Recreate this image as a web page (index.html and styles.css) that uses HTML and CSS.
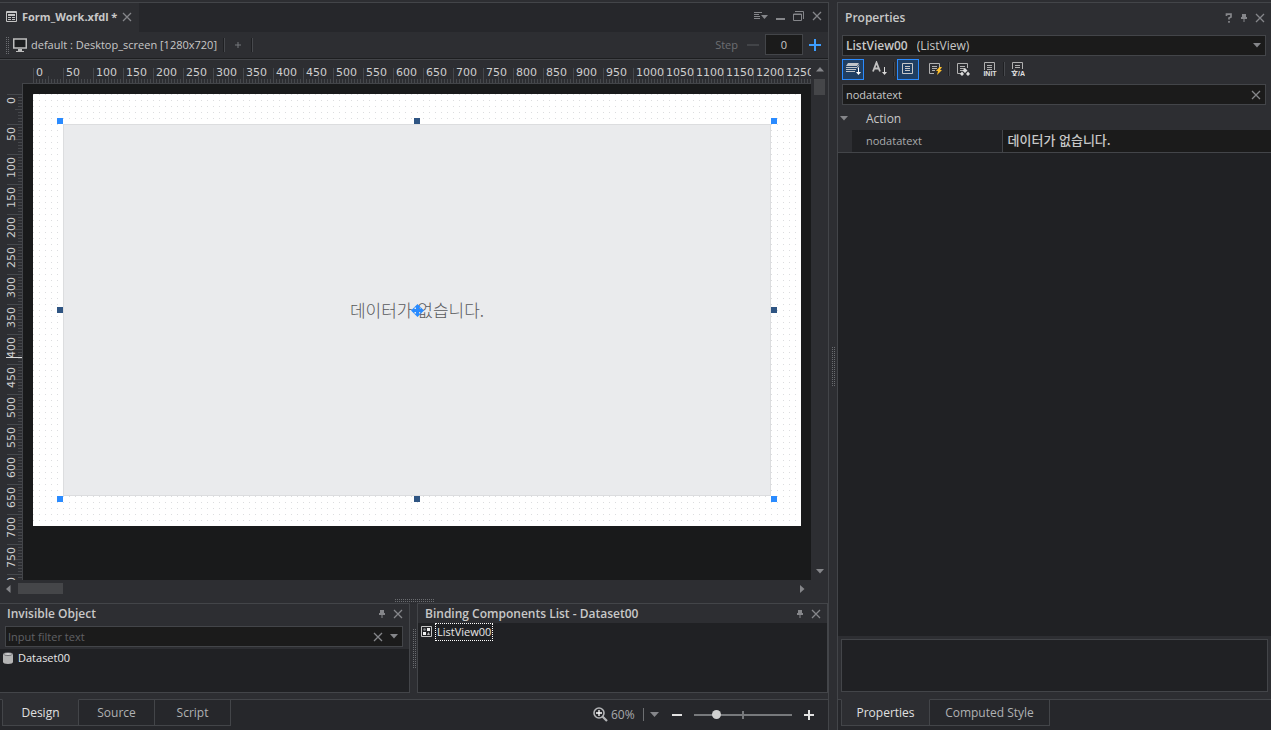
FILE: index.html
```html
<!DOCTYPE html>
<html lang="ko">
<head>
<meta charset="utf-8">
<title>Form_Work.xfdl</title>
<meta name="viewport" content="width=device-width, initial-scale=1">
<link rel="stylesheet" href="styles.css">
</head>
<body>
<svg class="defs" aria-hidden="true">
  <symbol id="close" viewBox="0 0 10 10"><path d="M1 1l8 8M9 1l-8 8" fill="none" stroke="currentColor" stroke-width="1.3"/></symbol>
  <symbol id="pin" viewBox="0 0 8 10"><path d="M2 1h4v3h1v2H1V4h1zM3.500 6h1v3h-1z" fill="currentColor"/></symbol>
  <symbol id="down" viewBox="0 0 8 5"><path d="M0 0h8L4 4.500z" fill="currentColor"/></symbol>
  <symbol id="page" viewBox="0 0 14 14"><path d="M11.500 6V1.500h-10v10H6M4 4.500h5M4 6.500h5M4 8.500h3" fill="none" stroke="currentColor"/></symbol>
</svg>
<div class="app">
  <main class="editor">
    <header class="doc-bar">
      <div class="doc-tab">
        <svg width="11" height="11" viewBox="0 0 11 11"><path d="M.5.5h10v10H.5zM0 1.500h11" fill="none" stroke="#c4c4c4"/><path d="M2 3h7v2H2zM2 6h3v1H2zM6 6h3v1H6zM2 8h3v1H2zM6 8h3v1H6z" fill="#c4c4c4"/></svg>
        <strong>Form_Work.xfdl *</strong>
        <button class="icon" aria-label="Close document"><svg width="10" height="10"><use href="#close"/></svg></button>
      </div>
      <div class="window-tools">
        <button class="icon" aria-label="Window list"><svg width="14" height="8" viewBox="0 0 14 8"><path d="M0 .5h8M0 2.500h5M0 4.500h6M0 6.500h6" stroke="currentColor"/><path d="M7 3h7l-3.500 4z" fill="currentColor"/></svg></button>
        <button class="icon" aria-label="Minimize"><svg width="9" height="10" viewBox="0 0 9 10"><path d="M0 8h9" stroke="currentColor" stroke-width="2"/></svg></button>
        <button class="icon" aria-label="Restore"><svg width="11" height="10" viewBox="0 0 11 10"><path d="M2 .5h8.500V8M.5 3h8v6.500h-8zM.5 3.500h8" fill="none" stroke="currentColor"/></svg></button>
        <button class="icon" aria-label="Close"><svg width="10" height="10"><use href="#close"/></svg></button>
      </div>
    </header>

    <div class="layout-bar">
      <span class="grip tall"></span>
      <button class="layout-button">
        <svg width="14" height="14" viewBox="0 0 14 14"><path d="M.75 1h12.500v9H.75z" fill="#1d1e20" stroke="#bdbdbd" stroke-width="1.500"/><path d="M5 11h4v2h2v1H3v-1h2z" fill="#bdbdbd"/></svg>
        default : Desktop_screen [1280x720]
      </button>
      <span class="divider"></span>
      <button class="add" aria-label="Add layout"><svg width="6" height="6" viewBox="0 0 6 6"><path d="M3 0v6M0 3h6" stroke="currentColor"/></svg></button>
      <span class="divider"></span>
      <div class="stepper">
        <label for="step">Step</label>
        <button class="icon minus" aria-label="Decrease step"><svg width="12" height="12" viewBox="0 0 12 12"><path d="M0 6h12" stroke="currentColor" stroke-width="1.500"/></svg></button>
        <input id="step" type="text" inputmode="numeric" value="0">
        <button class="icon plus" aria-label="Increase step"><svg width="12" height="12" viewBox="0 0 12 12"><path d="M6 0v12M0 6h12" stroke="currentColor" stroke-width="2"/></svg></button>
      </div>
    </div>

    <section class="workspace">
      <div class="ruler-x"><div class="ticks-x">
        <span>0</span><span>50</span><span>100</span><span>150</span><span>200</span><span>250</span><span>300</span><span>350</span><span>400</span><span>450</span><span>500</span><span>550</span><span>600</span><span>650</span><span>700</span><span>750</span><span>800</span><span>850</span><span>900</span><span>950</span><span>1000</span><span>1050</span><span>1100</span><span>1150</span><span>1200</span><span>1250</span>
      </div></div>
      <div class="ruler-y"><div class="ticks-y">
        <span>0</span><span>50</span><span>100</span><span>150</span><span>200</span><span>250</span><span>300</span><span>350</span><span>400</span><span>450</span><span>500</span><span>550</span><span>600</span><span>650</span><span>700</span><span>750</span><span>800</span>
        <i class="cursor-mark"></i>
      </div></div>
      <div class="stage">
        <div class="form">
          <div class="listview">
            <span class="empty-text">데이터가 없습니다.</span>
            <svg class="move" width="13" height="13" viewBox="0 0 13 13"><path d="M6.500 0L10 3.500H8V5h1.500V3L13 6.500 9.500 10V8H8v1.500h2L6.500 13 3 9.500h2V8H3.500v2L0 6.500 3.500 3v2H5V3.500H3z" fill="#2a8bff"/></svg>
            <i class="handle n w corner"></i><i class="handle n cx"></i><i class="handle n e corner"></i>
            <i class="handle cy w"></i><i class="handle cy e"></i>
            <i class="handle s w corner"></i><i class="handle s cx"></i><i class="handle s e corner"></i>
          </div>
        </div>
      </div>
      <div class="scroll-y">
        <svg width="8" height="5" viewBox="0 0 8 5"><path d="M0 4.500h8L4 0z" fill="currentColor"/></svg>
        <span class="thumb"></span>
        <svg class="last" width="8" height="5"><use href="#down"/></svg>
      </div>
      <div class="scroll-x">
        <svg width="5" height="8" viewBox="0 0 5 8"><path d="M4.500 0v8L0 4z" fill="currentColor"/></svg>
        <span class="thumb"></span>
        <svg class="last" width="5" height="8" viewBox="0 0 5 8"><path d="M0 0v8l4.500-4z" fill="currentColor"/></svg>
      </div>
    </section>

    <section class="dock">
      <span class="grip wide"></span>
      <div class="dock-panels">
        <section class="panel objects">
          <header class="panel-head">
            <h2>Invisible Object</h2>
            <button class="icon" aria-label="Pin"><svg width="8" height="10"><use href="#pin"/></svg></button>
            <button class="icon" aria-label="Close"><svg width="10" height="10"><use href="#close"/></svg></button>
          </header>
          <div class="field filter">
            <input type="text" aria-label="Filter objects" placeholder="Input filter text">
            <button class="icon" aria-label="Clear filter"><svg width="10" height="10"><use href="#close"/></svg></button>
            <button class="icon" aria-label="Filter history"><svg width="8" height="5"><use href="#down"/></svg></button>
          </div>
          <ul class="list">
            <li><svg width="10" height="12" viewBox="0 0 10 12"><path d="M0 2v8c0 1.200 2 2 5 2s5-.8 5-2V2z" fill="#b4b4b4"/><ellipse cx="5" cy="2" rx="4.500" ry="1.500" fill="#d0d0d0" stroke="#55565a" stroke-width=".8"/></svg><span>Dataset00</span></li>
          </ul>
        </section>
        <div class="gutter"><span class="grip side"></span></div>
        <section class="panel binding">
          <header class="panel-head">
            <h2>Binding Components List - Dataset00</h2>
            <button class="icon" aria-label="Pin"><svg width="8" height="10"><use href="#pin"/></svg></button>
            <button class="icon" aria-label="Close"><svg width="10" height="10"><use href="#close"/></svg></button>
          </header>
          <ul class="list">
            <li><svg width="11" height="11" viewBox="0 0 11 11"><path d="M.5.5h10v10H.5z" fill="none" stroke="#c4c4c4"/><path d="M6 2h3v3H6zM2 6h3v3H2z" fill="#f2f2f2"/><circle cx="3.500" cy="3.500" r="1.300" fill="#85878a"/><path d="M6 9l1.500-3L9 9z" fill="#b8b8b8"/></svg><span class="focused">ListView00</span></li>
          </ul>
        </section>
      </div>
    </section>

    <footer class="status">
      <nav class="tabs design-tabs">
        <button class="active">Design</button><button>Source</button><button>Script</button>
      </nav>
      <div class="zoom">
        <svg width="15" height="15" viewBox="0 0 15 15"><circle cx="6" cy="6" r="5" fill="none" stroke="#b4b5b7" stroke-width="1.600"/><path d="M9.500 9.500l4.500 4.500" stroke="#b4b5b7" stroke-width="2.200"/><path d="M6 3v6M3 6h6" stroke="#fff" stroke-width="1.300"/></svg>
        <div class="select-box">
          <select aria-label="Zoom"><option>60%</option></select>
          <svg width="9" height="5" viewBox="0 0 9 5"><path d="M0 0h9L4.500 5z" fill="currentColor"/></svg>
        </div>
        <button class="icon bright" aria-label="Zoom out"><svg width="10" height="10" viewBox="0 0 10 10"><path d="M0 5h10" stroke="currentColor" stroke-width="2"/></svg></button>
        <input class="slider" type="range" min="0" max="100" value="20" aria-label="Zoom level">
        <button class="icon bright" aria-label="Zoom in"><svg width="10" height="10" viewBox="0 0 10 10"><path d="M5 0v10M0 5h10" stroke="currentColor" stroke-width="2"/></svg></button>
      </div>
    </footer>
  </main>

  <div class="splitter"><span class="grip side"></span></div>

  <aside class="properties">
    <header class="panel-head props-head">
      <h2>Properties</h2>
      <button class="icon" aria-label="Help"><svg width="8" height="10" viewBox="0 0 8 10"><path d="M1.500 3V1.200h4.500V4L4 5v1.500M4 8v1.700" fill="none" stroke="currentColor" stroke-width="1.700"/></svg></button>
      <button class="icon" aria-label="Pin"><svg width="8" height="10"><use href="#pin"/></svg></button>
      <button class="icon" aria-label="Close"><svg width="10" height="10"><use href="#close"/></svg></button>
    </header>
    <div class="field component">
      <label for="component">ListView00</label>
      <div class="select-box">
        <select id="component"><option>(ListView)</option></select>
        <svg width="8" height="5"><use href="#down"/></svg>
      </div>
    </div>
    <div class="prop-tools">
      <button class="tool on" aria-label="Group by category"><svg width="16" height="16" viewBox="0 0 16 16"><path d="M3 2h11l-2 3H1zM1 6h11v1H1zM1 8h10v1H1zM1 10h9v1H1z" fill="#c0c4c8"/><path d="M14 3.500l-2 3M14 5.500l-1 2" stroke="#c0c4c8"/><path d="M13.500 7v5" stroke="#fff"/><path d="M11 11h5l-2.500 3z" fill="#fff"/></svg></button>
      <button class="tool" aria-label="Sort alphabetically"><svg width="16" height="16" viewBox="0 0 16 16"><path d="M1 10.500L4.500 1.500 8 10.500M2.500 7.500h4" fill="none" stroke="#c0c0c0" stroke-width="1.800"/><path d="M12.500 6v6" stroke="#d8d8d8"/><path d="M10 11h5l-2.500 3z" fill="#d8d8d8"/></svg></button>
      <span class="divider"></span>
      <button class="tool on" aria-label="Properties"><svg width="14" height="14" viewBox="0 0 14 14"><path d="M1.500 1.500h10v10h-10zM4 4.500h5M4 6.500h5M4 8.500h5" fill="none" stroke="#c8c8c8"/></svg></button>
      <button class="tool" aria-label="Events"><svg width="14" height="14" viewBox="0 0 14 14"><use href="#page"/><path d="M11.500 5L8 9h2l-1 4 5-5h-2l2-3z" fill="#ffc02c"/></svg></button>
      <span class="divider"></span>
      <button class="tool" aria-label="Binding"><svg width="14" height="14" viewBox="0 0 14 14"><use href="#page"/><path d="M9 6l2.500 2.500L9 11 6.500 8.500zM6 9.500L8 12l-2 2-2-2zM12 9.500l2 2.500-2 2-2-2z" fill="#dcdcdc"/></svg></button>
      <button class="tool" aria-label="Initial values"><svg width="14" height="14" viewBox="0 0 14 14"><path d="M1.500 8V.5h10V8M4 3.500h5M4 5.500h5M4 7.500h5" fill="none" stroke="#b0b0b0"/><text x="7" y="14" text-anchor="middle">INIT</text></svg></button>
      <span class="divider"></span>
      <button class="tool" aria-label="Localized values"><svg width="14" height="14" viewBox="0 0 14 14"><path d="M1.500 7V.5h10V7M4 3.500h5M4 5.500h5" fill="none" stroke="#b0b0b0"/><text x="7" y="14" text-anchor="middle">文/A</text></svg></button>
    </div>
    <div class="field prop-filter">
      <input type="text" aria-label="Filter properties" value="nodatatext">
      <button class="icon" aria-label="Clear filter"><svg width="10" height="10"><use href="#close"/></svg></button>
    </div>
    <div class="prop-list">
      <table>
        <colgroup><col class="col-toggle"><col class="col-name"><col></colgroup>
        <tbody>
          <tr class="group"><td><svg width="8" height="5"><use href="#down"/></svg></td><th colspan="2" scope="rowgroup">Action</th></tr>
          <tr class="prop"><td></td><th scope="row">nodatatext</th><td class="value">데이터가 없습니다.</td></tr>
        </tbody>
      </table>
    </div>
    <div class="description"></div>
    <nav class="tabs prop-tabs">
      <button class="active">Properties</button><button>Computed Style</button>
    </nav>
  </aside>
</div>
</body>
</html>
```
FILE: styles.css
```css
:root {
  --panel: #2d2e32;
  --bar: #26272b;
  --list: #202124;
  --input: #1b1b1b;
  --line: #434549;
  --text: #c8c8c8;
  --muted: #85868a;
  --blue: #2a8bff;
}

* { box-sizing: border-box; }

body {
  margin: 0;
  background: var(--panel);
  color: var(--text);
  font: 12px/16px "Open Sans", "Noto Sans CJK KR", sans-serif;
}

button, input, select {
  margin: 0;
  padding: 0;
  border: 0;
  border-radius: 0;
  background: none;
  color: inherit;
  font: inherit;
  outline: 0;
}

select { appearance: none; }
svg { display: block; flex: none; }
h2 { margin: 0; font-size: 12px; font-weight: 600; white-space: nowrap; }
.defs { position: absolute; width: 0; height: 0; }

.app {
  display: grid;
  grid-template-columns: minmax(0, 1fr) 8px 434px;
  min-height: 100vh;
  padding-top: 2px;
}

.icon { display: grid; place-items: center; color: var(--muted); }
.divider { width: 2px; height: 14px; background: linear-gradient(90deg, #1f2023 50%, #47494d 50%); }

/* Dotted drag handles: one lit pixel in every 2px tile */
.grip {
  display: block;
  background:
    linear-gradient(var(--panel) 1px, transparent 1px) 0 0 / 2px 2px,
    linear-gradient(90deg, var(--panel) 1px, #6a6c70 1px) 0 0 / 2px 2px;
}
.grip.tall { width: 4px; height: 18px; }
.grip.wide { width: 40px; height: 4px; margin: 0 auto; }
.grip.side { width: 4px; height: 40px; }

/* Editor */
.editor {
  display: flex;
  flex-direction: column;
  min-width: 0;
  border: solid var(--line);
  border-width: 1px 1px 0 0;
}

.doc-bar { display: flex; justify-content: space-between; height: 29px; background: var(--bar); }
.doc-tab { display: flex; align-items: center; gap: 5px; padding: 0 7px 2px 6px; background: var(--panel); }
.doc-tab strong { font-size: 11px; font-weight: 700; }
.window-tools { display: flex; align-items: center; gap: 8px; padding: 0 6px 3px 0; }

.layout-bar {
  display: flex;
  align-items: center;
  height: 28px;
  padding: 0 7px 2px 5px;
  border-bottom: 1px solid var(--line);
  box-shadow: inset 0 -1px #1d1e20;
}
.layout-button { display: flex; align-items: center; gap: 4px; margin: 0 6px 0 4px; font-size: 11px; white-space: nowrap; }
.add { padding: 0 10px; color: #77797d; }
.stepper { display: flex; align-items: center; margin-left: auto; color: #6d6f73; font-size: 11px; }
.stepper .minus { margin: 0 6px 0 9px; color: #4a4c50; }
.stepper .plus { margin-left: 6px; color: #3d9dff; }
.stepper input {
  width: 38px;
  height: 21px;
  border: 1px solid var(--line);
  background: var(--input);
  color: var(--text);
  text-align: center;
}

.workspace {
  display: grid;
  flex: 1;
  grid-template: 23px minmax(0, 1fr) 17px / 22px minmax(0, 1fr) 17px;
  min-height: 0;
}
.ruler-x, .ruler-y { overflow: hidden; min-width: 0; min-height: 0; color: #cfcfcf; font: 11px/16px "DejaVu Sans", sans-serif; }
.ruler-x { grid-area: 1 / 2; padding-left: 11px; }
.ruler-y { grid-area: 2 / 1; padding-top: 11px; contain: size; }
.ticks-x {
  display: flex;
  height: 100%;
  padding-top: 5px;
  background:
    linear-gradient(90deg, #46484c 1px, transparent 1px) 0 100% / 30px 15px repeat-x,
    linear-gradient(90deg, #46484c 1px, transparent 1px) 15px 100% / 30px 7px repeat-x,
    linear-gradient(90deg, #46484c 1px, transparent 1px) 0 100% / 3px 4px repeat-x;
}
.ticks-x span { flex: 0 0 30px; width: 30px; padding-left: 3px; }
.ticks-y {
  position: relative;
  display: flex;
  flex-direction: column;
  padding-left: 4px;
  background:
    linear-gradient(#46484c 1px, transparent 1px) 100% 0 / 15px 30px repeat-y,
    linear-gradient(#46484c 1px, transparent 1px) 100% 15px / 7px 30px repeat-y,
    linear-gradient(#46484c 1px, transparent 1px) 100% 0 / 4px 3px repeat-y;
}
.ticks-y span {
  flex: none;
  width: 16px;
  height: 30px;
  padding-bottom: 3px;
  writing-mode: vertical-rl;
  transform: rotate(180deg);
  text-align: end;
}
.cursor-mark { position: absolute; top: 263px; left: 6px; right: 0; height: 1px; background: #d8d8d8; }

.stage {
  grid-area: 2 / 2;
  overflow: hidden;
  padding: 10px;
  border: solid var(--line);
  border-width: 1px 0 0 1px;
  background: #191a1b;
  contain: size;
}
.form {
  aspect-ratio: 16 / 9;
  padding: 30px;
  background: linear-gradient(#fff 5px, transparent 5px), linear-gradient(90deg, #fff 5px, #dcdddf 5px);
  background-position: 1px 1px;
  background-size: 6px 6px;
}
.listview {
  position: relative;
  display: grid;
  place-items: center;
  height: 100%;
  border: 1px solid #dcdddf;
  background: #eaebed;
}
.empty-text { color: #58595c; font: 300 17px/24px "Noto Sans CJK KR", sans-serif; }
.move { position: absolute; top: calc(50% - 6px); left: calc(50% - 6px); }
.handle { position: absolute; width: 6px; height: 6px; background: #2f5583; }
.handle.corner { background: var(--blue); }
.handle.n { top: -7px; }
.handle.s { bottom: -7px; }
.handle.w { left: -7px; }
.handle.e { right: -7px; }
.handle.cx { left: calc(50% - 3px); }
.handle.cy { top: calc(50% - 3px); }

.scroll-y, .scroll-x { display: flex; align-items: center; color: var(--muted); }
.scroll-y { grid-area: 1 / 3 / 3 / 4; flex-direction: column; padding: 7px 0 6px; }
.scroll-y .thumb { width: 11px; height: 16px; margin-top: 7px; }
.scroll-x { grid-area: 3 / 1 / 4 / 3; padding: 0 6px; }
.scroll-x .thumb { width: 45px; height: 11px; margin-left: 7px; }
.thumb { background: #454649; }
.scroll-y .last { margin-top: auto; }
.scroll-x .last { margin-left: auto; }

/* Docked panels */
.dock { padding: 1px 0 6px; }
.dock-panels { display: grid; grid-template-columns: minmax(0, 410fr) 7px minmax(0, 411fr); margin-top: 1px; }
.gutter, .splitter { display: grid; place-items: center; }
.panel { display: flex; flex-direction: column; min-height: 90px; border: 1px solid var(--line); }
.objects { border-left: 0; }
.panel-head { display: flex; align-items: center; gap: 7px; height: 19px; padding: 0 6px 0 7px; }
.panel-head h2 { flex: 1; }
.objects .panel-head { height: 22px; padding-bottom: 2px; }

.field { display: flex; align-items: center; height: 21px; border: 1px solid var(--line); background: var(--input); }
.field input { flex: 1; min-width: 0; padding: 0 3px; font-size: 11px; }
.field input::placeholder { color: #606165; opacity: 1; }
.filter { flex: none; gap: 7px; margin: 0 6px 2px 5px; padding-right: 4px; }
.filter input { padding: 0 2px; }

.list { flex: 1; margin: 0; padding: 0; background: var(--list); color: #e8e8e8; font-size: 11px; list-style: none; }
.list li { display: flex; align-items: center; gap: 4px; height: 17px; padding-left: 3px; }
.list li span { padding: 0 1px; }
.focused { outline: 1px dotted #fff; }

/* Bottom tabs */
.tabs { display: flex; height: 27px; }
.tabs button { border: solid var(--line); border-width: 1px 1px 1px 0; background: var(--bar); color: #b0b1b3; }
.tabs .active { border-top-color: var(--panel); border-left-width: 1px; background: var(--panel); color: #e0e0e0; }

.status {
  display: flex;
  justify-content: space-between;
  height: 31px;
  background: linear-gradient(var(--line) 1px, var(--bar) 1px);
}
.design-tabs { padding-left: 2px; }
.design-tabs button { width: 76px; }
.design-tabs .active { width: 77px; }

.zoom { display: flex; align-items: center; padding-right: 14px; color: #a8a9ab; }
.select-box { display: grid; flex: 1; align-items: center; }
.select-box > * { grid-area: 1 / 1; }
.select-box svg { justify-self: end; color: var(--muted); pointer-events: none; }
.zoom .select-box { flex: none; width: 48px; margin: 0 13px 0 3px; }
.zoom select { background: linear-gradient(#6d6f72, #6d6f72) 32px 50% / 1px 13px no-repeat; }
.bright { color: #e2e2e2; }
.slider {
  appearance: none;
  width: 98px;
  height: 12px;
  margin: 0 12px;
  background:
    linear-gradient(#77797c, #77797c) 0 50% / 100% 2px no-repeat,
    linear-gradient(#77797c, #77797c) 50% 50% / 2px 8px no-repeat;
}
.slider::-webkit-slider-thumb { appearance: none; width: 9px; height: 9px; border-radius: 50%; background: #d0d0d0; }

/* Properties */
.properties { display: flex; flex-direction: column; min-width: 0; border: solid var(--line); border-width: 1px 0 0 1px; }
.props-head { height: 32px; padding: 0 6px 2px 7px; }
.component { margin: 0 5px 0 4px; padding: 0 4px 0 3px; }
.component label { margin-right: 9px; font-weight: 600; }
.prop-tools { display: flex; align-items: center; height: 28px; margin-left: 4px; padding-bottom: 2px; }
.tool { display: grid; place-items: center; width: 22px; height: 21px; margin-right: 5px; border: 1px solid transparent; }
.tool.on { border-color: var(--blue); background: #203f63; }
.tool svg { color: #b0b0b0; }
.prop-tools .divider { margin: 0 2px 0 -3px; }
.tool text { fill: #e0e0e0; font: 700 7px "Liberation Sans", "Noto Sans CJK KR", sans-serif; }
.prop-filter { margin: 0 5px 2px 4px; padding-right: 4px; }

.prop-list { flex: 1; background: var(--list); }
table { width: 100%; border-collapse: collapse; table-layout: fixed; font-size: 11px; }
.col-toggle { width: 14px; }
.col-name { width: 150px; }
td, th { padding: 0 0 0 14px; font-weight: 400; text-align: left; }
tr { height: 23px; }
tr td:first-child { padding: 0 0 0 2px; background: var(--panel); }
.group { background: var(--panel); font-size: 12px; }
.group svg { color: var(--muted); }
.prop { height: 22px; border-bottom: 1px solid var(--line); }
.prop th { border-right: 1px solid var(--line); color: #a9aaac; }
.prop .value { padding: 0 0 2px 5px; background: var(--input); font: 500 13px/16px "Noto Sans CJK KR", sans-serif; }

.description { height: 53px; margin: 3px 3px 7px; border: 1px solid var(--line); background: var(--list); }
.prop-tabs { height: 31px; padding: 0 0 4px 3px; background: linear-gradient(var(--line) 1px, var(--bar) 1px); }
.prop-tabs button { width: 120px; }
.prop-tabs .active { width: 89px; }
```
